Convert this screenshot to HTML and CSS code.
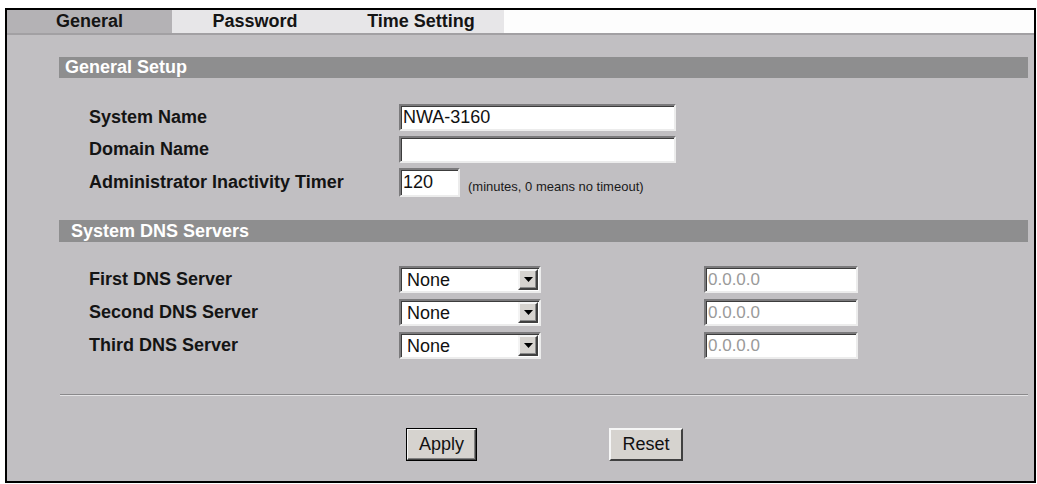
FILE: index.html
```html
<!DOCTYPE html>
<html lang="en">
<head>
    <meta charset="UTF-8">
    <title>General</title>
    <link rel="stylesheet" href="styles.css">
</head>
<body>
    <div class="frame">
        <div class="tabs">
            <div class="tab active">General</div>
            <div class="tab">Password</div>
            <div class="tab">Time Setting</div>
            <div class="tab-fill"></div>
        </div>
        <form class="content" autocomplete="off">
            <div class="section-title">General Setup</div>
            <div class="form-grid general">
                <label class="form-label" for="sysName">System Name</label>
                <div class="field-wide"><input type="text" id="sysName" class="text-input name-input" value="NWA-3160"></div>

                <label class="form-label" for="domName">Domain Name</label>
                <div class="field-wide"><input type="text" id="domName" class="text-input name-input" value=""></div>

                <label class="form-label" for="timer">Administrator Inactivity Timer</label>
                <div class="field-wide">
                    <input type="text" id="timer" class="text-input timer-input" value="120">
                    <span class="hint">(minutes, 0 means no timeout)</span>
                </div>
            </div>

            <div class="section-title indent">System DNS Servers</div>
            <div class="form-grid dns">
                <label class="form-label">First DNS Server</label>
                <div class="select-box"><span class="select-value">None</span><span class="select-arrow"><svg width="9" height="5" viewBox="0 0 9 5"><path d="M0 0h9L4.5 5z" fill="#000"/></svg></span></div>
                <div><input type="text" class="text-input ip-input" value="0.0.0.0" disabled></div>

                <label class="form-label">Second DNS Server</label>
                <div class="select-box"><span class="select-value">None</span><span class="select-arrow"><svg width="9" height="5" viewBox="0 0 9 5"><path d="M0 0h9L4.5 5z" fill="#000"/></svg></span></div>
                <div><input type="text" class="text-input ip-input" value="0.0.0.0" disabled></div>

                <label class="form-label">Third DNS Server</label>
                <div class="select-box"><span class="select-value">None</span><span class="select-arrow"><svg width="9" height="5" viewBox="0 0 9 5"><path d="M0 0h9L4.5 5z" fill="#000"/></svg></span></div>
                <div><input type="text" class="text-input ip-input" value="0.0.0.0" disabled></div>
            </div>

            <div class="divider"></div>

            <div class="actions">
                <button type="submit" class="btn btn-default">Apply</button>
                <button type="reset" class="btn">Reset</button>
            </div>
        </form>
    </div>
</body>
</html>
```

FILE: styles.css
```css
* {
    margin: 0;
    padding: 0;
    box-sizing: border-box;
}

body {
    font-family: 'Liberation Sans', Arial, sans-serif;
    background: #fff;
    color: #111;
}

.frame {
    margin: 8px 0 0 5px;
    width: 1031px;
    height: 475px;
    border: 2px solid #000;
    display: flex;
    flex-direction: column;
    background: #c1bfc2;
}

.tabs {
    display: flex;
    height: 25px;
    border-bottom: 2px solid #a2a0a3;
}

.tab {
    width: 165px;
    background: #e7e6e8;
    font-size: 18px;
    font-weight: bold;
    line-height: 23px;
    text-align: center;
    color: #141414;
}

.tab + .tab { width: 166px; }

.tab.active {
    background: #b4b2b5;
    width: 165px;
}

.tab-fill {
    flex: 1;
    background: #fdfdfd;
}

.content {
    flex: 1;
    padding: 22px 6px 0 52px;
}

.section-title {
    height: 21px;
    background: #8e8e8f;
    color: #fff;
    font-size: 18px;
    font-weight: bold;
    line-height: 20px;
    padding-left: 6px;
}

.section-title.indent {
    padding-left: 12px;
    height: 22px;
    line-height: 22px;
}

.form-grid {
    display: grid;
    grid-template-columns: 310px 305px auto;
    align-items: center;
    margin: 26px 0 23px 30px;
}

.form-grid.general {
    grid-template-columns: 310px auto;
    row-gap: 5px;
}

.form-grid.dns {
    row-gap: 6px;
    margin: 24px 0 35px 30px;
}

.form-label {
    font-size: 18px;
    font-weight: bold;
    color: #141414;
}

.field-wide {
    display: flex;
    align-items: flex-end;
}

.text-input {
    display: block;
    height: 27px;
    font-family: 'Liberation Sans', Arial, sans-serif;
    font-size: 18px;
    color: #111;
    background: #fff;
    padding: 0 2px;
    border: 2px solid;
    border-color: #7b7a7c #ececec #ececec #7b7a7c;
    box-shadow: inset 1px 1px 0 #3c3c3c;
    outline: none;
}

.name-input { width: 277px; }

.timer-input { width: 61px; height: 29px; }

.ip-input {
    width: 154px;
    font-size: 17px;
    color: #9a9a9a;
    -webkit-text-fill-color: #9a9a9a;
}

.hint {
    font-size: 13px;
    margin: 0 0 3px 8px;
    color: #1a1a1a;
}

.select-box {
    display: flex;
    width: 142px;
    height: 27px;
    background: #fff;
    border: 2px solid;
    border-color: #7b7a7c #ececec #ececec #7b7a7c;
    box-shadow: inset 1px 1px 0 #3c3c3c;
    padding: 1px;
}

.select-value {
    flex: 1;
    font-size: 18px;
    line-height: 22px;
    padding-left: 5px;
}

.select-arrow {
    width: 20px;
    background: #d6d3cf;
    border: 2px solid;
    border-color: #f4f4f4 #404040 #404040 #f4f4f4;
    box-shadow: inset -1px -1px 0 #8a8a8a;
    display: flex;
    align-items: center;
    justify-content: center;
}

.divider {
    height: 2px;
    border-top: 1px solid #8a898b;
    border-bottom: 1px solid #e4e3e5;
    margin-left: 1px;
}

.actions {
    display: flex;
    padding: 32px 0 0 347px;
    gap: 132px;
}

.btn {
    height: 33px;
    width: 74px;
    font-family: 'Liberation Sans', Arial, sans-serif;
    font-size: 18px;
    color: #111;
    background: #d6d3cf;
    border: 2px solid;
    border-color: #f6f6f6 #404040 #404040 #f6f6f6;
    cursor: pointer;
}

.btn-default {
    width: 71px;
    outline: 1px solid #000;
    outline-offset: -1px;
    box-shadow: inset -1px -1px 0 #808080;
}
```
